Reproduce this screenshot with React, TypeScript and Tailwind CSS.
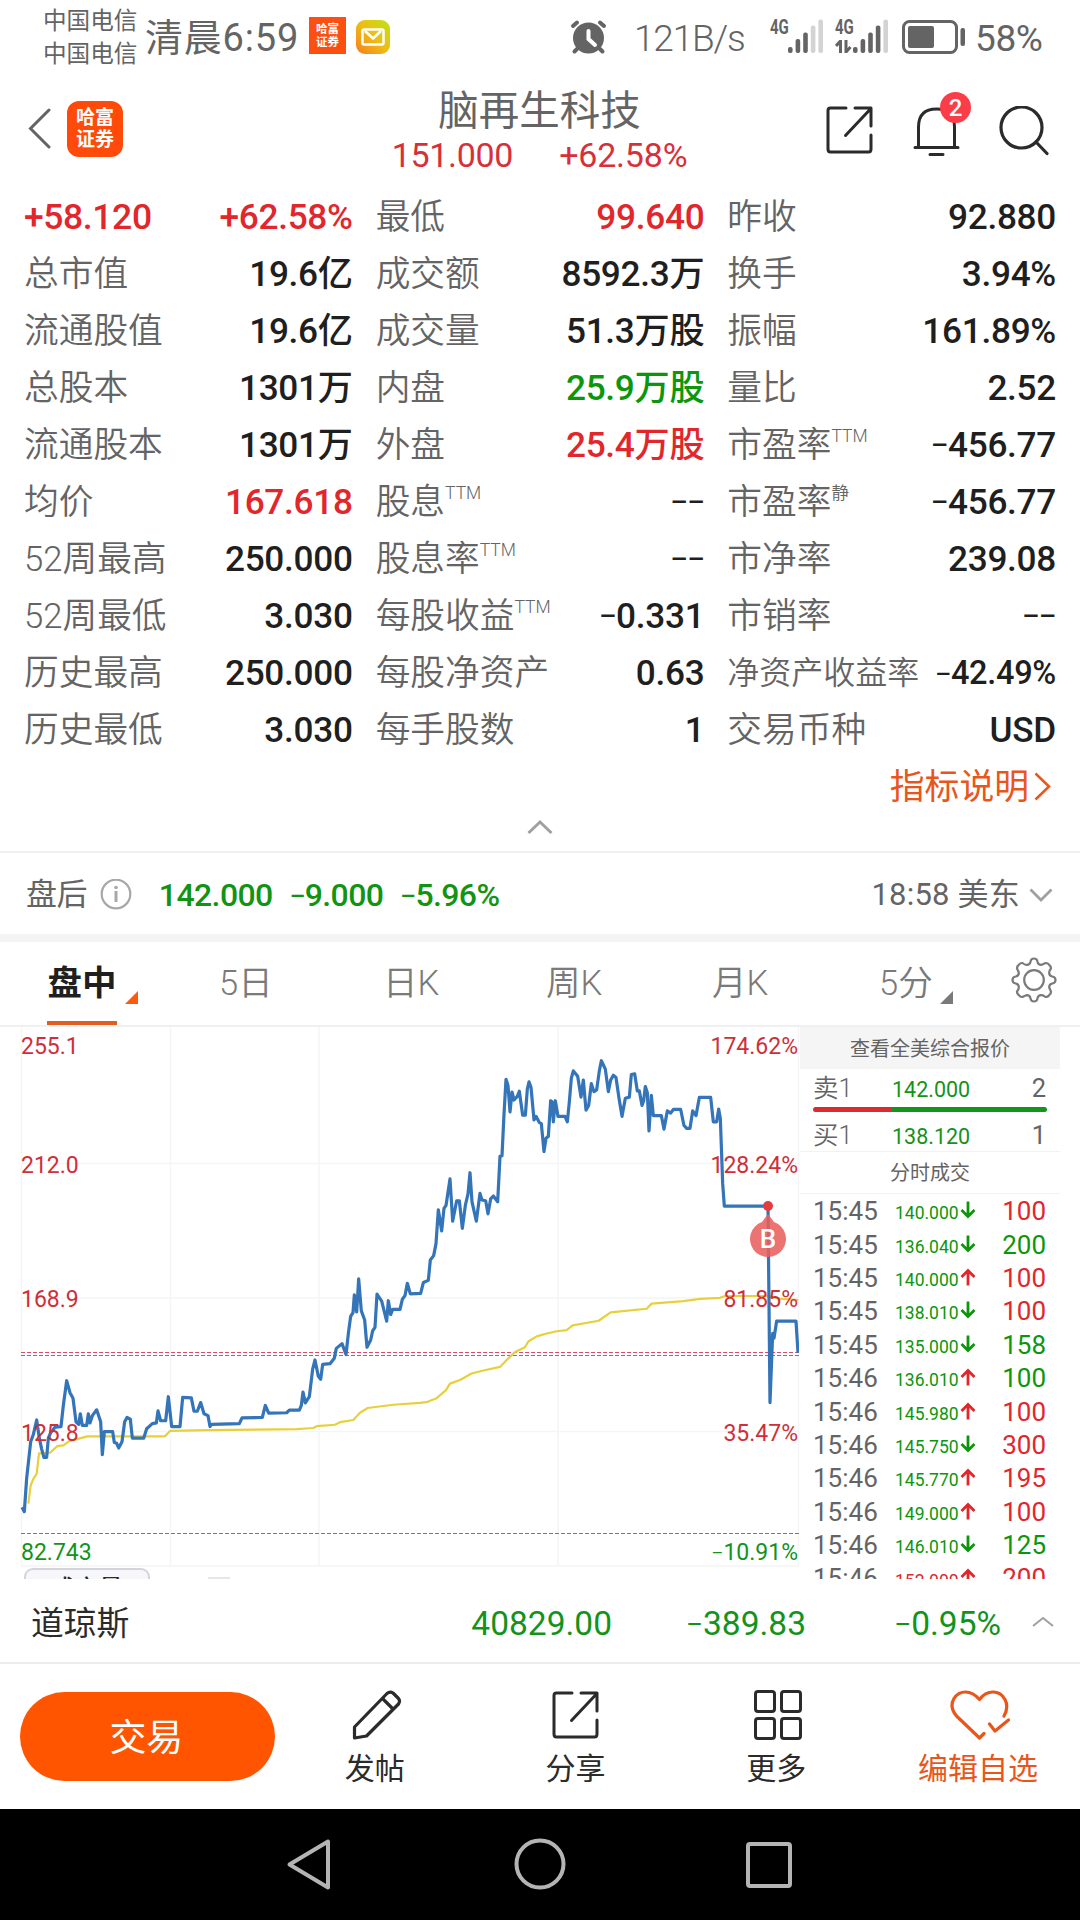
import type { ReactNode } from 'react'
import clsx from 'clsx'

type Tone = 'up' | 'down' | 'plain'

const toneClass: Record<Tone, string> = {
  up: 'text-[#e1262c]',
  down: 'text-[#0c960c]',
  plain: 'text-[#1f1f1f]',
}

type Stat = { label: string; sup?: string; value: string; tone?: Tone; lead?: boolean; tight?: boolean }

const columns: Stat[][] = [
  [
    { label: '+58.120', value: '+62.58%', tone: 'up', lead: true },
    { label: '总市值', value: '19.6亿' },
    { label: '流通股值', value: '19.6亿' },
    { label: '总股本', value: '1301万' },
    { label: '流通股本', value: '1301万' },
    { label: '均价', value: '167.618', tone: 'up' },
    { label: '52周最高', value: '250.000' },
    { label: '52周最低', value: '3.030' },
    { label: '历史最高', value: '250.000' },
    { label: '历史最低', value: '3.030' },
  ],
  [
    { label: '最低', value: '99.640', tone: 'up' },
    { label: '成交额', value: '8592.3万' },
    { label: '成交量', value: '51.3万股' },
    { label: '内盘', value: '25.9万股', tone: 'down' },
    { label: '外盘', value: '25.4万股', tone: 'up' },
    { label: '股息', sup: 'TTM', value: '--' },
    { label: '股息率', sup: 'TTM', value: '--' },
    { label: '每股收益', sup: 'TTM', value: '-0.331' },
    { label: '每股净资产', value: '0.63' },
    { label: '每手股数', value: '1' },
  ],
  [
    { label: '昨收', value: '92.880' },
    { label: '换手', value: '3.94%' },
    { label: '振幅', value: '161.89%' },
    { label: '量比', value: '2.52' },
    { label: '市盈率', sup: 'TTM', value: '-456.77' },
    { label: '市盈率', sup: '静', value: '-456.77' },
    { label: '市净率', value: '239.08' },
    { label: '市销率', value: '--' },
    { label: '净资产收益率', value: '-42.49%', tight: true },
    { label: '交易币种', value: 'USD' },
  ],
]

type Trade = { time: string; price: string; dir: 'up' | 'down'; volume: string; tone: Tone; priceTone?: Tone }

const trades: Trade[] = [
  { time: '15:45', price: '140.000', dir: 'down', volume: '100', tone: 'up' },
  { time: '15:45', price: '136.040', dir: 'down', volume: '200', tone: 'down' },
  { time: '15:45', price: '140.000', dir: 'up', volume: '100', tone: 'up' },
  { time: '15:45', price: '138.010', dir: 'down', volume: '100', tone: 'up' },
  { time: '15:45', price: '135.000', dir: 'down', volume: '158', tone: 'down' },
  { time: '15:46', price: '136.010', dir: 'up', volume: '100', tone: 'down' },
  { time: '15:46', price: '145.980', dir: 'up', volume: '100', tone: 'up' },
  { time: '15:46', price: '145.750', dir: 'down', volume: '300', tone: 'up' },
  { time: '15:46', price: '145.770', dir: 'up', volume: '195', tone: 'up' },
  { time: '15:46', price: '149.000', dir: 'up', volume: '100', tone: 'up' },
  { time: '15:46', price: '146.010', dir: 'down', volume: '125', tone: 'down' },
  { time: '15:46', price: '152.000', dir: 'up', volume: '200', tone: 'up', priceTone: 'up' },
]

const priceLine =
  '66,1340 73,1352 80,1260 92,1160 100,1140 110,1100 118,1150 125,1180 132,1203 140,1203 145,1150 152,1135 165,1120 183,1118 190,1060 200,992 210,1025 219,1040 228,1105 236,1112 241,1083 247,1115 260,1115 265,1083 270,1108 277,1088 290,1072 302,1105 307,1195 313,1132 338,1132 343,1162 350,1164 356,1177 366,1160 374,1105 381,1093 391,1098 397,1150 431,1150 440,1124 457,1110 469,1108 474,1075 482,1102 497,1102 505,1036 515,1118 540,1118 548,1038 574,1039 582,1076 592,1076 602,1052 612,1083 624,1088 630,1118 635,1112 718,1110 726,1094 787,1093 796,1060 806,1081 860,1080 868,1073 898,1073 904,1060 909,1023 916,1053 928,1036 938,960 945,935 955,980 962,988 968,947 990,945 1003,930 1009,903 1026,890 1038,920 1046,855 1052,815 1059,805 1063,756 1070,803 1076,712 1084,800 1094,825 1101,900 1112,880 1118,855 1125,845 1131,754 1145,773 1160,828 1165,772 1172,810 1178,796 1200,796 1207,768 1215,758 1222,724 1231,753 1262,752 1270,722 1285,716 1291,660 1301,648 1308,615 1315,522 1325,580 1332,518 1338,510 1350,437 1358,553 1370,497 1378,497 1387,573 1396,510 1404,478 1410,420 1416,500 1429,553 1440,477 1446,495 1457,497 1464,533 1472,492 1480,484 1493,500 1500,375 1506,373 1512,260 1518,163 1524,180 1530,253 1536,198 1542,220 1552,210 1558,196 1568,262 1576,262 1582,190 1587,170 1593,185 1602,275 1608,265 1618,282 1624,285 1632,362 1638,325 1645,320 1652,222 1656,225 1660,280 1666,222 1674,265 1695,265 1702,280 1708,225 1714,160 1720,140 1733,155 1743,212 1750,165 1758,248 1766,235 1774,175 1782,197 1790,192 1798,140 1804,112 1816,135 1825,197 1832,165 1840,152 1848,158 1857,215 1866,265 1876,215 1888,212 1894,150 1904,148 1912,195 1918,195 1926,235 1931,222 1936,183 1942,200 1947,305 1954,207 1960,263 1984,263 1992,300 2002,250 2012,256 2020,246 2042,246 2052,290 2060,298 2070,298 2078,250 2088,263 2098,213 2132,213 2140,280 2150,280 2156,245 2161,270 2168,450 2173,512 2304,512 2310,1052 2318,862 2322,875 2330,828 2388,828 2394,915'

const averageLine =
  '85,1330 92,1280 100,1262 110,1248 117,1192 150,1190 172,1172 190,1170 208,1158 262,1145 495,1145 510,1130 630,1128 890,1125 940,1122 950,1117 1005,1113 1020,1106 1060,1100 1080,1080 1103,1067 1180,1058 1260,1053 1280,1051 1290,1047 1310,1040 1338,1018 1350,1000 1380,990 1415,972 1450,964 1500,954 1520,935 1545,913 1575,900 1585,884 1610,870 1640,862 1670,856 1700,853 1718,840 1796,827 1832,804 1940,794 1955,780 2050,773 2100,767 2160,764 2175,759 2304,759 2335,766 2395,770'

const axisLabels = [
  { y: 27, left: '255.1', right: '174.62%', fill: '#cf2f38' },
  { y: 146, left: '212.0', right: '128.24%', fill: '#cf2f38' },
  { y: 280, left: '168.9', right: '81.85%', fill: '#cf2f38' },
  { y: 414, left: '125.8', right: '35.47%', fill: '#cf2f38' },
  { y: 533, left: '82.743', right: '-10.91%', fill: '#14931a' },
]

// Swaps every hyphen for a short dash that sits at the middle of the digits.
function Num({ children }: { children: string }) {
  return (
    <>
      {children.split('').map((char, i) =>
        char === '-' ? (
          <span key={i} className="relative -top-[0.07em] text-[0.76em] leading-none">
            –
          </span>
        ) : (
          char
        ),
      )}
    </>
  )
}

function SignalBars({ level }: { level: number }) {
  return (
    <svg width="36" height="34" viewBox="0 0 36 34">
      {[6, 14, 20.5, 27.5, 33.5].map((h, i) => (
        <rect key={h} x={i * 7.6} y={34 - h} width="4.6" height={h} rx="2" fill={i < level ? '#646464' : '#d3d3d3'} />
      ))}
    </svg>
  )
}

function ShareIcon({ color }: { color: string }) {
  return (
    <svg width="47" height="48" viewBox="0 0 47 48" fill="none" stroke={color} strokeWidth="3" strokeLinecap="round" strokeLinejoin="round">
      <path d="M20 2H4.5Q2 2 2 4.5V43Q2 46 4.5 46H42.5Q45 46 45 43V29M29 2H45V20M44 3.5L19.5 29.5" />
    </svg>
  )
}

function StatusBar() {
  return (
    <header className="flex h-[75px] shrink-0 pl-[43px] text-[#646464]">
      <div className="mt-[5px] w-[102px] text-[23.6px] leading-[33px] whitespace-nowrap">
        <p>中国电信</p>
        <p>中国电信</p>
      </div>
      <p className="mt-[13px] w-[164px] text-[38px] leading-[50px] tracking-[0.8px] whitespace-nowrap">清晨6:59</p>
      <div className="mt-[17px] flex h-[37px] w-[37px] flex-col items-center justify-center bg-[#fd4f12] text-[11.5px] leading-[13px] font-bold text-white">
        <span>哈富</span>
        <span>证券</span>
      </div>
      <div className="mt-5 ml-2.5 flex h-[34px] w-[34px] items-center justify-center rounded-[9px] bg-linear-to-tr from-[#f47c1c] via-[#eebc14] to-[#b6e414]">
        <svg width="24" height="18" viewBox="0 0 24 18" fill="none" stroke="#fff" strokeWidth="2.5" strokeLinejoin="round">
          <rect x="1.5" y="1.5" width="21" height="15" rx="1.5" />
          <path d="M4 3L12 10.5L20 3" />
        </svg>
      </div>
      <svg className="mt-[19px] ml-[180px]" width="37" height="36" viewBox="0 0 37 36" fill="none" strokeLinecap="round">
        <circle cx="18.5" cy="19" r="15.5" fill="#646464" />
        <path d="M3 7L7 3.5M34 7L30 3.5" stroke="#646464" strokeWidth="4" />
        <path d="M7 30L4.5 32.5M30 30L32.5 32.5" stroke="#646464" strokeWidth="4" />
        <path d="M18.5 12V20L25 26" stroke="#fff" strokeWidth="4" />
      </svg>
      <p className="mt-[14px] ml-[27px] w-[136px] text-[37px] leading-[50px] font-light tracking-[-1.2px]">121B/s</p>
      <div className="mt-[19px] flex">
        <span className="w-[18px] origin-left scale-x-75 text-[20px] leading-[16px] font-bold">4G</span>
        <SignalBars level={3} />
      </div>
      <div className="mt-[19px] ml-[11px] flex">
        <div className="w-[18px]">
          <p className="w-[18px] origin-left scale-x-75 text-[20px] leading-[16px] font-bold">4G</p>
          <svg className="mt-[5px]" width="17" height="13" viewBox="0 0 17 13" fill="none" stroke="#646464" strokeWidth="3">
            <path d="M5.5 13V1L1 6M11 0V12L15.5 7" />
          </svg>
        </div>
        <SignalBars level={4} />
      </div>
      <svg className="mt-[20px] ml-[13px]" width="64" height="34" viewBox="0 0 64 34">
        <rect x="1.5" y="1.5" width="53" height="31" rx="6" fill="none" stroke="#646464" strokeWidth="3" />
        <rect x="6" y="6" width="26" height="22" rx="2" fill="#646464" />
        <rect x="58.5" y="8" width="4.5" height="18" rx="2" fill="#646464" />
      </svg>
      <p className="mt-[14px] ml-[9px] text-[37px] leading-[50px] tracking-[-0.4px]">58%</p>
    </header>
  )
}

function TitleBar() {
  return (
    <div className="flex h-[113px] shrink-0 pl-[28px]">
      <svg className="mt-[33px]" width="24" height="41" viewBox="0 0 24 41" fill="none" stroke="#646464" strokeWidth="3" strokeLinecap="round">
        <path d="M21 2L2.5 20.5L21 39" />
      </svg>
      <div className="mt-[26px] ml-[15px] flex h-[56px] w-[56px] flex-col items-center justify-center rounded-[12px] bg-[#ff4a0a] text-[19px] leading-[22px] font-bold text-white">
        <span>哈富</span>
        <span>证券</span>
      </div>
      <div className="w-[703px] pt-[11px] pl-[130px] text-center">
        <h1 className="text-[40.5px] leading-[50px] text-[#646464]">脑再生科技</h1>
        <p className="flex justify-center gap-[46px] text-[34px] leading-[38px] text-[#d8303a]">
          <span className="tracking-[-0.3px]">151.000</span>
          <span className="tracking-[-0.2px]">+62.58%</span>
        </p>
      </div>
      <div className="mt-[31px] flex">
        <ShareIcon color="#2b2b2b" />
        <div className="relative ml-[40px]">
          <svg width="47" height="51" viewBox="0 0 47 51" fill="none" stroke="#2b2b2b" strokeWidth="3" strokeLinecap="round">
            <path d="M5.5 41V21Q5.5 3 23.5 3Q41.5 3 41.5 21V41M2 41.5H45M17 48.5H30" />
          </svg>
          <span className="absolute -top-[14px] left-[27px] flex h-[31px] w-[31px] items-center justify-center rounded-full bg-[#fb3d49] text-[24px] leading-none font-medium text-white">
            2
          </span>
        </div>
        <svg className="ml-[39px]" width="50" height="50" viewBox="0 0 50 50" fill="none" stroke="#2b2b2b" strokeWidth="3.2" strokeLinecap="round">
          <circle cx="22.5" cy="21.5" r="20.5" />
          <path d="M37 36L48 47.5" />
        </svg>
      </div>
    </div>
  )
}

function StatRow({ stat }: { stat: Stat }) {
  return (
    <div className="flex h-[57px] items-center justify-between leading-[50px] whitespace-nowrap">
      <span
        className={clsx(
          stat.lead ? 'text-[35.5px] font-medium tracking-[-0.4px] text-[#e1262c]' : 'font-[350] text-[#646464]',
          !stat.lead && (stat.tight ? 'text-[32px]' : 'text-[34.7px]'),
        )}
      >
        {stat.label}
        {stat.sup && <sup className="-top-[15px] text-[17.5px] leading-none">{stat.sup}</sup>}
      </span>
      <span className={clsx('font-medium tracking-[-0.3px]', stat.tight ? 'text-[32.5px]' : 'text-[35.2px]', toneClass[stat.tone ?? 'plain'])}>
        <Num>{stat.value}</Num>
      </span>
    </div>
  )
}

function Stats() {
  return (
    <section className="h-[663px] shrink-0">
      <div className="grid grid-cols-3 gap-[23px] px-6">
        {columns.map((column, i) => (
          <div key={i}>
            {column.map((stat, j) => (
              <StatRow key={j} stat={stat} />
            ))}
          </div>
        ))}
      </div>
      <div className="flex h-[57px] items-center justify-end gap-[5px] pr-[29px] text-[34.8px] leading-[50px] text-[#e8561c]">
        指标说明
        <svg width="17" height="29" viewBox="0 0 17 29" fill="none" stroke="currentColor" strokeWidth="2.5">
          <path d="M1.5 1.5L15 14.5L1.5 27.5" />
        </svg>
      </div>
      <svg className="mx-auto mt-[4px]" width="26" height="16" viewBox="0 0 26 16" fill="none" stroke="#a0a0a0" strokeWidth="3">
        <path d="M1.5 14L13 3L24.5 14" />
      </svg>
    </section>
  )
}

function AfterHours() {
  return (
    <section className="flex h-[91px] shrink-0 items-center border-t-2 border-b-8 border-t-[#f0f0f0] border-b-[#f4f4f4] pt-[2px] pr-[27px] pl-[26px] text-[31px] leading-[46px] text-[#646464]">
      <span className="tracking-[-0.6px]">盘后</span>
      <svg className="ml-[13px]" width="32" height="32" viewBox="0 0 32 32" fill="none" stroke="#a8a8a8" strokeWidth="2.2">
        <circle cx="16" cy="15" r="14.3" />
        <path d="M16 12V23" strokeWidth="3" />
        <circle cx="16" cy="8.5" r="1.8" fill="#a8a8a8" stroke="none" />
      </svg>
      <p className="ml-[27px] flex gap-[17px] text-[32px] font-medium tracking-[-0.6px] text-[#119413]">
        <span>
          <Num>142.000</Num>
        </span>
        <span>
          <Num>-9.000</Num>
        </span>
        <span>
          <Num>-5.96%</Num>
        </span>
      </p>
      <span className="ml-auto tracking-[0.2px]">18:58 美东</span>
      <svg className="ml-[9px]" width="24" height="14" viewBox="0 0 24 14" fill="none" stroke="#a0a0a0" strokeWidth="2.8">
        <path d="M1.5 1.5L12 12L22.5 1.5" />
      </svg>
    </section>
  )
}

function Corner({ className }: { className: string }) {
  return (
    <svg className={className} width="13" height="13" viewBox="0 0 13 13" fill="currentColor">
      <path d="M13 0V13H0Z" />
    </svg>
  )
}

function Tabs() {
  return (
    <nav className="flex h-[85px] shrink-0 border-b-2 border-[#f0f0f0] pl-[47px] text-[34.5px] leading-[82px] font-[350] whitespace-nowrap text-[#7a7a7a]">
      <div className="flex w-[172px]">
        <span className="h-[83px] w-[70px] border-b-4 border-[#df5f22] text-center font-bold text-[#1f1f1f]">盘中</span>
        <Corner className="mt-[49px] ml-[8px] text-[#ff5a0c]" />
      </div>
      <span className="w-[164px]">5日</span>
      <span className="w-[163px]">日K</span>
      <span className="w-[166px]">周K</span>
      <span className="w-[167px]">月K</span>
      <span>5分</span>
      <Corner className="mt-[49px] ml-[7px] text-[#7a7a7a]" />
      <svg className="mt-[15px] ml-[58px]" width="46" height="46" viewBox="-23 -23 46 46" fill="none" stroke="#7a7a7a" strokeWidth="2.2" strokeLinejoin="round">
        <circle r="9.8" />
        <path d="M-3.5 -18.3Q-3 -21.5 0 -21.5Q3 -21.5 3.5 -18.3Q4.2 -15 7.5 -15.2Q9.5 -16 11.5 -17Q13.7 -17.2 15.2 -15.2Q17.2 -13.5 17 -11.5Q15 -9 15.2 -7.5Q15 -4.2 18.3 -3.5Q21.5 -3 21.5 0Q21.5 3 18.3 3.5Q15 4.2 15.2 7.5Q16 9.5 17 11.5Q17.2 13.7 15.2 15.2Q13.5 17.2 11.5 17Q9 15 7.5 15.2Q4.2 15 3.5 18.3Q3 21.5 0 21.5Q-3 21.5 -3.5 18.3Q-4.2 15 -7.5 15.2Q-9.5 16 -11.5 17Q-13.7 17.2 -15.2 15.2Q-17.2 13.5 -17 11.5Q-15 9 -15.2 7.5Q-15 4.2 -18.3 3.5Q-21.5 3 -21.5 0Q-21.5 -3 -18.3 -3.5Q-15 -4.2 -15.2 -7.5Q-16 -9.5 -17 -11.5Q-17.2 -13.7 -15.2 -15.2Q-13.5 -17.2 -11.5 -17Q-9 -15 -7.5 -15.2Q-4.2 -15 -3.5 -18.3Z" />
      </svg>
    </nav>
  )
}

function Chart() {
  return (
    <div className="relative w-[800px] shrink-0">
      <svg width="800" height="552" viewBox="0 0 800 552">
        <g stroke="#f5f5f5" strokeWidth="1.5">
          {[21.5, 170.5, 319, 558, 798.5].map((x) => (
            <line key={x} x1={x} x2={x} y1="0" y2="539" />
          ))}
          {[136.5, 271, 404.5, 539].map((y) => (
            <line key={y} x1="21" x2="799" y1={y} y2={y} />
          ))}
        </g>
        <line x1="21" x2="799" y1="506.5" y2="506.5" stroke="#7a7a7a" strokeWidth="1" strokeDasharray="4 2" />
        <g stroke="#d4506a" strokeWidth="1" strokeDasharray="4 2">
          <line x1="21" x2="799" y1="325.5" y2="325.5" />
          <line x1="21" x2="799" y1="328.5" y2="328.5" />
        </g>
        <svg x="0" y="0" width="799" height="552" viewBox="0 19.25 2397 1518" preserveAspectRatio="none" fill="none" strokeLinejoin="round">
          <polyline points={averageLine} stroke="#e8d03a" strokeWidth="2.2" vectorEffect="non-scaling-stroke" />
          <polyline points={priceLine} stroke="#3474b8" strokeWidth="3.2" vectorEffect="non-scaling-stroke" />
        </svg>
        <circle cx="768" cy="179" r="5" fill="#e63c40" />
        <path d="M768 187L774 195A18 18 0 1 1 762 195Z" fill="#e8605f" fillOpacity="0.88" />
        <text x="768" y="221" textAnchor="middle" fontSize="26" fontWeight="500" fill="#fff">
          B
        </text>
        {axisLabels.map((label) => (
          <g key={label.left} fontSize="23" fill={label.fill}>
            <text x="21" y={label.y}>{label.left}</text>
            <text x="798" y={label.y} textAnchor="end">
              {label.right.startsWith('-') ? (
                <>
                  <tspan fontSize="18" dy="-1.5">–</tspan>
                  <tspan dy="1.5">{label.right.slice(1)}</tspan>
                </>
              ) : (
                label.right
              )}
            </text>
          </g>
        ))}
        <rect x="208" y="550" width="22" height="2" fill="#e6e6ea" />
      </svg>
      <div className="absolute top-[541px] left-[24px] h-[11px] w-[126px] overflow-hidden rounded-t-[9px] border-2 border-b-0 border-[#d4d4dc] bg-[#f7f7fb] pt-[4px] text-center text-[24px] leading-[30px] font-medium text-[#2b2b2b]">
        成交量
      </div>
    </div>
  )
}

function QuoteRow({ name, price, size }: { name: string; price: string; size: string }) {
  return (
    <div className="flex h-[36px] items-center pr-[14px] pl-[13px] text-[25.5px] leading-[36px] font-[350] text-[#646464]">
      <span className="w-[79px]">{name}</span>
      <span className="pt-[3px] text-[21.5px] font-normal text-[#14931a]">{price}</span>
      <span className="ml-auto font-normal">{size}</span>
    </div>
  )
}

function TradeArrow({ dir }: { dir: 'up' | 'down' }) {
  return (
    <svg
      className={clsx('mb-[3px] ml-px', dir === 'up' ? 'rotate-180 text-[#e1262c]' : 'text-[#0c960c]')}
      width="16"
      height="18"
      viewBox="0 0 16 18"
      fill="none"
      stroke="currentColor"
      strokeWidth="2.8"
    >
      <path d="M8 0.5V16M1.5 9L8 15.5L14.5 9" />
    </svg>
  )
}

function OrderBook() {
  return (
    <aside className="w-[260px] shrink-0">
      <div className="h-[42px] bg-[#f5f5f5] text-center text-[20px] leading-[44px] text-[#646464]">查看全美综合报价</div>
      <div className="pt-px">
        <QuoteRow name="卖1" price="142.000" size="2" />
      </div>
      <div className="mx-[13px] mt-px flex h-[5px] overflow-hidden rounded-full">
        <div className="w-1/3 bg-[#dc2b2f]" />
        <div className="w-2/3 bg-[#12961a]" />
      </div>
      <div className="h-[40px] border-b border-[#f2f2f2] pt-[5px]">
        <QuoteRow name="买1" price="138.120" size="1" />
      </div>
      <div className="h-[42px] border-b border-[#f2f2f2] text-center text-[20px] leading-[42px] text-[#646464]">分时成交</div>
      <div className="pt-px">
        {trades.map((trade, i) => (
          <div key={i} className="flex h-[33.4px] items-center pr-[14px] pl-[13px] text-[26px] leading-[33px]">
            <span className="w-[82px] text-[#646464]">{trade.time}</span>
            <span className={clsx('pt-[4px] text-[17.5px]', toneClass[trade.priceTone ?? 'down'])}>{trade.price}</span>
            <TradeArrow dir={trade.dir} />
            <span className={clsx('ml-auto', toneClass[trade.tone])}>{trade.volume}</span>
          </div>
        ))}
      </div>
    </aside>
  )
}

function IndexBar() {
  return (
    <section className="flex h-[85px] shrink-0 items-center border-b-2 border-[#ececec] pt-[6px] text-[33.5px] leading-[46px] text-[#14931a]">
      <span className="w-[352px] pl-[31px] text-[32.8px] text-[#2b2b2b]">道琼斯</span>
      <span className="w-[260px] text-right">
        <Num>40829.00</Num>
      </span>
      <span className="w-[194px] text-right">
        <Num>-389.83</Num>
      </span>
      <span className="w-[195px] text-right">
        <Num>-0.95%</Num>
      </span>
      <svg className="-mt-[4px] ml-[31px]" width="22" height="11" viewBox="0 0 22 11" fill="none" stroke="#a0a0a0" strokeWidth="2">
        <path d="M1 10L11 2L21 10" />
      </svg>
    </section>
  )
}

function Action({ label, className, children }: { label: string; className: string; children: ReactNode }) {
  return (
    <button className={clsx('flex flex-col items-center pt-[23px] text-[30px] leading-[40px] whitespace-nowrap', className)}>
      <span className="flex h-[56px] items-center">{children}</span>
      <span className="mt-[6px]">{label}</span>
    </button>
  )
}

function Actions() {
  return (
    <footer className="flex h-[145px] shrink-0 pl-5 text-[#2b2b2b]">
      <button className="mt-[28px] h-[89px] w-[255px] rounded-full bg-[#ff5500] pr-[2px] text-[37px] leading-[93px] text-white">交易</button>
      <Action label="发帖" className="w-[200px]">
        <svg className="ml-[4px]" width="50" height="50" viewBox="0 0 50 50" fill="none" stroke="currentColor" strokeWidth="3.2" strokeLinejoin="round">
          <path d="M2.5 48V37L35 3.5Q38 1 41 3L46.5 8.500Q48.5 11 46.5 14L14.5 46L2.5 48Z" />
          <path d="M30.5 8.500L40.5 18.5" />
        </svg>
      </Action>
      <Action label="分享" className="w-[202px]">
        <ShareIcon color="#2b2b2b" />
      </Action>
      <Action label="更多" className="w-[200px]">
        <svg className="ml-[3px]" width="48" height="50" viewBox="0 0 48 50" fill="none" stroke="currentColor" strokeWidth="3">
          <rect x="1.5" y="1.5" width="19" height="20" rx="2.5" />
          <rect x="27.5" y="1.5" width="19" height="20" rx="2.5" />
          <rect x="1.5" y="28.5" width="19" height="20" rx="2.5" />
          <rect x="27.5" y="28.5" width="19" height="20" rx="2.5" />
        </svg>
      </Action>
      <Action label="编辑自选" className="w-[204px] text-[#e8561c]">
        <svg className="ml-[4px]" width="60" height="50" viewBox="0 0 60 50" fill="none" stroke="currentColor" strokeWidth="3.2" strokeLinecap="round" strokeLinejoin="round">
          <path d="M34 43.5L29.5 48L6.5 26Q-1 17 4 8.5Q8 2 15.5 2Q23 2 29.5 9.5Q35 2 43 2Q51 2 55 9.5Q59 17 54 26" />
          <path d="M39.5 34L45 41L58.5 30" />
        </svg>
      </Action>
    </footer>
  )
}

function SystemNav() {
  return (
    <div className="flex h-[111px] shrink-0 bg-black">
      <svg className="mt-[29px] ml-[286px]" width="46" height="53" viewBox="0 0 46 53" fill="none" stroke="#b4b4b4" strokeWidth="4" strokeLinejoin="round">
        <path d="M3.5 26.5L42 3.5V49.5Z" />
      </svg>
      <svg className="mt-[29px] ml-[182px]" width="52" height="52" viewBox="0 0 52 52" fill="none" stroke="#b4b4b4" strokeWidth="4">
        <circle cx="26" cy="26" r="23.5" />
      </svg>
      <div className="mt-[33px] ml-[180px] h-[46px] w-[46px] rounded-[4px] border-4 border-[#b4b4b4]" />
    </div>
  )
}

export default function App() {
  return (
    <div className="flex h-[1920px] w-[1080px] flex-col overflow-hidden bg-white font-['Roboto','Noto_Sans_CJK_SC',sans-serif]">
      <StatusBar />
      <TitleBar />
      <Stats />
      <AfterHours />
      <Tabs />
      <main className="flex h-[552px] shrink-0 overflow-hidden">
        <Chart />
        <OrderBook />
      </main>
      <IndexBar />
      <Actions />
      <SystemNav />
    </div>
  )
}
